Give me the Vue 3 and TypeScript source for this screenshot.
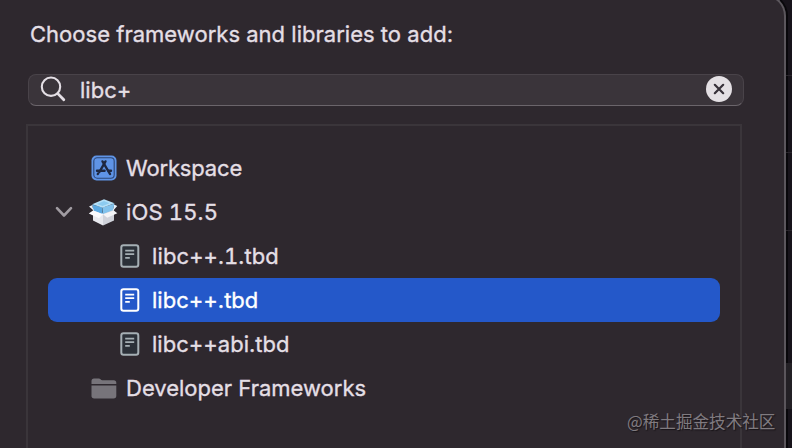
<script setup lang="ts">
import { ref } from 'vue'

type Kind = 'workspace' | 'sdk' | 'file' | 'folder'
interface Row {
  label: string
  kind: Kind
  numeric?: boolean
}

const query = ref('libc+')
const selected = ref('libc++.tbd')
const rows: Row[] = [
  { label: 'Workspace', kind: 'workspace' },
  { label: 'iOS 15.5', kind: 'sdk' },
  { label: 'libc++.1.tbd', kind: 'file', numeric: true },
  { label: 'libc++.tbd', kind: 'file' },
  { label: 'libc++abi.tbd', kind: 'file' },
  { label: 'Developer Frameworks', kind: 'folder' },
]
</script>

<template>
  <div class="screen">
    <main class="dialog">
      <h1 class="title">Choose frameworks and libraries to add:</h1>
      <div class="search">
        <svg class="lens" width="28" height="28" viewBox="0 0 28 28">
          <circle cx="11" cy="10.7" r="9.2" />
          <path d="M17.8 17.6L23.8 23.8" class="handle" />
        </svg>
        <span class="query">{{ query }}</span>
        <svg class="clear" width="26" height="26" viewBox="0 0 26 26" @click="query = ''">
          <circle cx="13" cy="13" r="13" />
          <path d="M8.8 8.8L17.2 17.2M17.2 8.8L8.8 17.2" />
        </svg>
      </div>
      <section class="list">
        <div
          v-for="row in rows"
          :key="row.label"
          class="row"
          :class="[row.kind, { selected: row.label === selected, numeric: row.numeric }]"
          @click="selected = row.label"
        >
          <svg v-if="row.kind === 'sdk'" class="chevron" width="18" height="12" viewBox="0 0 18 12">
            <path d="M2 2.2L9 9.5L16 2.2" />
          </svg>

          <svg v-if="row.kind === 'workspace'" width="26" height="26" viewBox="0 0 26 26">
            <rect x=".5" y=".5" width="25" height="25" rx="5" fill="#5f94e6" />
            <rect x="2.8" y="2.8" width="20.4" height="20.4" rx="3.4" fill="none" stroke="#2c4676" stroke-width="1.1" />
            <g fill="none" stroke="#1f2840" stroke-width="2.4" stroke-linecap="round">
              <path d="M14.5 6.4L8.4 17" />
              <path d="M11.5 6.4L19 19" />
              <path d="M6 15.8H13.6M17.5 15.8H20" />
              <path d="M7.1 18.5L6.8 19" />
            </g>
          </svg>

          <svg v-else-if="row.kind === 'sdk'" width="30" height="28" viewBox="0 0 30 28">
            <path d="M5 11L15 15V27.5L5 22.5Z" fill="#e8e9ee" />
            <path d="M15 15L26 11V22.5L15 27.5Z" fill="#d0d2da" />
            <path d="M4.2 6.5L14.5 9.6V16L5.4 12.5Z" fill="#5aa9e2" />
            <path d="M14.5 9.6L26.3 5.6L25.4 12L15 16Z" fill="#82c2ec" />
            <path d="M4.2 6.2L16 1.2L26.5 5.2L14.5 9.8Z" fill="#b4e0f8" />
            <path d="M9 6L16 3.1L21.5 5.2L14.5 7.9Z" fill="#8ccbf0" />
            <path d="M5 12.4L15 16.2L11 20.2L.8 15.6Z" fill="#fafafd" />
            <path d="M15 16.2L25.8 12.4L29.3 15.2L19.2 19.8Z" fill="#f4f4f7" />
            <path d="M5 12.1L1 8.4L4.5 7V9L6 12.4Z" fill="#e7f0f8" />
            <path d="M25.8 12.1L29.2 8L26 6.6V9L24.6 12.4Z" fill="#e7f0f8" />
          </svg>

          <svg v-else-if="row.kind === 'file'" class="doc" width="20" height="24" viewBox="0 0 20 24">
            <rect x="1.3" y="1.3" width="17" height="21.4" rx="2.2" />
            <path d="M5.2 6.6H14.2M5.2 10.2H14.2M5.2 13.8H9.8" />
          </svg>

          <svg v-else width="26" height="21" viewBox="0 0 26 21">
            <path d="M.5 6V3Q.5 .5 3 .5H7.8C9.3 .5 9.7 2.2 11.4 2.2H22.8Q25.3 2.2 25.3 4.7V6Z" fill="#77747a" />
            <path d="M.5 7.5H25.3V17.7Q25.3 20.4 22.6 20.4H3.2Q.5 20.4 .5 17.7Z" fill="#77747a" />
          </svg>

          <span class="label">{{ row.label }}</span>
        </div>
      </section>
    </main>
    <aside class="backdrop">
      <div class="band"></div>
      <div class="band"></div>
      <div class="cell"></div>
    </aside>
    <div class="watermark">@稀土掘金技术社区</div>
  </div>
</template>

<style>
body {
  background: #17131a;
}
</style>

<style scoped>
.screen {
  position: relative;
  display: flex;
  width: 792px;
  height: 448px;
  overflow: hidden;
  background: #17131a;
  color: #e4dfe5;
  font-family: Inter, "Liberation Sans", sans-serif;
  font-size: 22px;
  line-height: 28px;
}
.dialog {
  box-sizing: border-box;
  flex: none;
  width: 786px;
  height: 480px;
  margin-top: -6px;
  padding: 26px 40px 0 26px;
  background: #2e282e;
  border: 2px solid #5b565c;
  border-left: 0;
  border-bottom: 0;
  border-top-right-radius: 22px;
  box-shadow: 1px 0 0 1px #08070a;
}
.title,
.query,
.label {
  -webkit-text-stroke: 0.35px currentColor;
}
.title {
  margin: -2px 0 0 4px;
  height: 28px;
  font-size: 22px;
  font-weight: 400;
  letter-spacing: 0.02px;
  white-space: nowrap;
}
.search {
  box-sizing: border-box;
  display: flex;
  align-items: center;
  width: 716px;
  height: 32px;
  margin: 26px 0 0 2px;
  padding: 0 11px 0 11px;
  background: #3a343a;
  border: 1px solid #494349;
  border-bottom: 1px solid #6b656b;
  border-radius: 8px;
}
.lens {
  flex: none;
  fill: none;
  stroke: #e4dfe5;
  stroke-width: 2.1;
}
.handle {
  stroke-width: 2.8;
  stroke-linecap: round;
}
.query {
  flex: 1;
  padding-left: 12px;
}
.clear {
  flex: none;
  margin-bottom: 2px;
  fill: #e4e0e4;
}
.clear path {
  fill: none;
  stroke: #373139;
  stroke-width: 2.2;
  stroke-linecap: round;
}
.list {
  box-sizing: border-box;
  width: 716px;
  height: 340px;
  margin-top: 18px;
  padding: 20px;
  border: 2px solid #3a353a;
}
.row {
  display: flex;
  align-items: center;
  height: 44px;
  border-radius: 9px;
  white-space: nowrap;
}
.row svg {
  flex: none;
}
.workspace,
.folder {
  padding-left: 42.5px;
}
.workspace .label,
.folder .label {
  padding-left: 9.5px;
}
.workspace .label {
  letter-spacing: -0.15px;
}
.sdk {
  padding-left: 7px;
}
.chevron {
  margin-right: 15px;
  fill: none;
  stroke: #a19ca2;
  stroke-width: 2.6;
  stroke-linecap: round;
  stroke-linejoin: round;
}
.sdk .label {
  padding-left: 8px;
  font-variant-numeric: tabular-nums;
  letter-spacing: 0.15px;
}
.file {
  padding-left: 72px;
}
.file .label {
  padding-left: 12px;
}
.file.numeric .label {
  font-variant-numeric: tabular-nums;
  letter-spacing: 0.12px;
}
.doc {
  fill: #2b3038;
  stroke: #a5afb4;
  stroke-width: 2;
}
.doc path {
  stroke-width: 1.7;
}
.selected {
  background: #2458c9;
  color: #fff;
}
.selected .doc {
  fill: none;
  stroke: #fff;
}
.backdrop {
  flex: 1;
  padding-top: 75px;
}
.band {
  height: 76px;
  border-top: 1px solid #29252b;
}
.band + .band {
  height: 77px;
  border-bottom: 1px solid #29252b;
}
.cell {
  height: 46px;
  margin-top: 132px;
  background: #232025;
}
.watermark {
  position: absolute;
  left: 627px;
  top: 408px;
  color: #807b80;
  font-family: "Noto Sans CJK SC", sans-serif;
  font-size: 16.6px;
  line-height: 26px;
  white-space: nowrap;
  text-shadow: 1px 1px 1px #171317;
}
</style>
